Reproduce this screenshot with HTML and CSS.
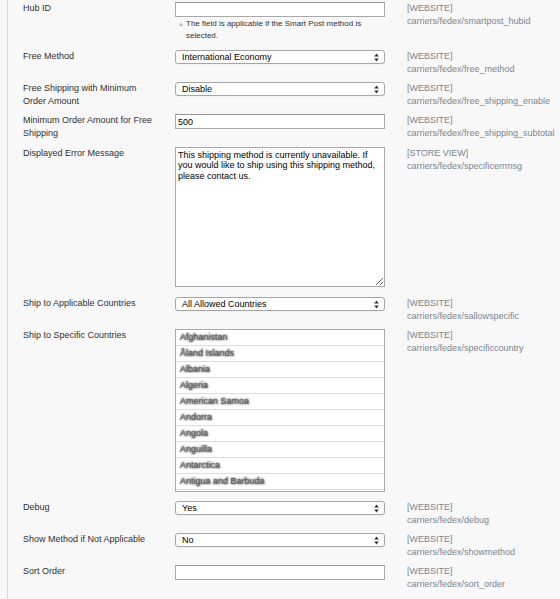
FILE: index.html
```html
<!DOCTYPE html>
<html>
<head>
<meta charset="utf-8">
<link rel="stylesheet" href="styles.css">
</head>
<body>
<div class="page">
  <div class="row r-hub">
    <div class="label">Hub ID</div>
    <div class="control">
      <input class="text" type="text" value="">
      <div class="note"><span class="note-ico">▲</span><span>The field is applicable if the Smart Post method is selected.</span></div>
    </div>
    <div class="scope"><div>[WEBSITE]</div><div>carriers/fedex/smartpost_hubid</div></div>
  </div>

  <div class="row">
    <div class="label">Free Method</div>
    <div class="control"><div class="select"><span>International Economy</span><svg class="arr" width="5" height="9" viewBox="0 0 5 9"><path d="M2.5 0.5L4.8 3.6H0.2Z M2.5 8.5L4.8 5.4H0.2Z" fill="#333"/></svg></div></div>
    <div class="scope"><div>[WEBSITE]</div><div>carriers/fedex/free_method</div></div>
  </div>

  <div class="row">
    <div class="label">Free Shipping with Minimum Order Amount</div>
    <div class="control"><div class="select"><span>Disable</span><svg class="arr" width="5" height="9" viewBox="0 0 5 9"><path d="M2.5 0.5L4.8 3.6H0.2Z M2.5 8.5L4.8 5.4H0.2Z" fill="#333"/></svg></div></div>
    <div class="scope"><div>[WEBSITE]</div><div>carriers/fedex/free_shipping_enable</div></div>
  </div>

  <div class="row r-min">
    <div class="label">Minimum Order Amount for Free Shipping</div>
    <div class="control"><input class="text" type="text" value="500"></div>
    <div class="scope"><div>[WEBSITE]</div><div>carriers/fedex/free_shipping_subtotal</div></div>
  </div>

  <div class="row r-msg">
    <div class="label">Displayed Error Message</div>
    <div class="control"><textarea class="area">This shipping method is currently unavailable. If you would like to ship using this shipping method, please contact us.</textarea></div>
    <div class="scope"><div>[STORE VIEW]</div><div>carriers/fedex/specificerrmsg</div></div>
  </div>

  <div class="row">
    <div class="label">Ship to Applicable Countries</div>
    <div class="control"><div class="select"><span>All Allowed Countries</span><svg class="arr" width="5" height="9" viewBox="0 0 5 9"><path d="M2.5 0.5L4.8 3.6H0.2Z M2.5 8.5L4.8 5.4H0.2Z" fill="#333"/></svg></div></div>
    <div class="scope"><div>[WEBSITE]</div><div>carriers/fedex/sallowspecific</div></div>
  </div>

  <div class="row r-multi">
    <div class="label">Ship to Specific Countries</div>
    <div class="control">
      <div class="multi">
        <div class="opt">Afghanistan</div>
        <div class="opt">Åland Islands</div>
        <div class="opt">Albania</div>
        <div class="opt">Algeria</div>
        <div class="opt">American Samoa</div>
        <div class="opt">Andorra</div>
        <div class="opt">Angola</div>
        <div class="opt">Anguilla</div>
        <div class="opt">Antarctica</div>
        <div class="opt">Antigua and Barbuda</div>
      </div>
    </div>
    <div class="scope"><div>[WEBSITE]</div><div>carriers/fedex/specificcountry</div></div>
  </div>

  <div class="row">
    <div class="label">Debug</div>
    <div class="control"><div class="select"><span>Yes</span><svg class="arr" width="5" height="9" viewBox="0 0 5 9"><path d="M2.5 0.5L4.8 3.6H0.2Z M2.5 8.5L4.8 5.4H0.2Z" fill="#333"/></svg></div></div>
    <div class="scope"><div>[WEBSITE]</div><div>carriers/fedex/debug</div></div>
  </div>

  <div class="row">
    <div class="label">Show Method if Not Applicable</div>
    <div class="control"><div class="select"><span>No</span><svg class="arr" width="5" height="9" viewBox="0 0 5 9"><path d="M2.5 0.5L4.8 3.6H0.2Z M2.5 8.5L4.8 5.4H0.2Z" fill="#333"/></svg></div></div>
    <div class="scope"><div>[WEBSITE]</div><div>carriers/fedex/showmethod</div></div>
  </div>

  <div class="row">
    <div class="label">Sort Order</div>
    <div class="control"><input class="text" type="text" value=""></div>
    <div class="scope"><div>[WEBSITE]</div><div>carriers/fedex/sort_order</div></div>
  </div>
</div>
</body>
</html>
```

FILE: styles.css
```css
html, body {
  margin: 0;
  padding: 0;
  background: #f8f8f8;
}
body {
  font-family: "Liberation Sans", Arial, Helvetica, sans-serif;
  font-size: 9px;
  color: #303030;
}
.page {
  margin-left: 7px;
  border-left: 1px solid #d9d9d9;
  padding: 2px 0 0 15px;
  min-height: 597px;
}
.row {
  display: grid;
  grid-template-columns: 152px 210px 1fr;
  column-gap: 0;
  margin-bottom: 6px;
  align-items: start;
}
.r-hub { margin-bottom: 8px; }
.r-min { margin-bottom: 7px; }
.r-msg { margin-bottom: 10px; }
.r-multi { margin-bottom: 9px; }
.label {
  line-height: 13px;
  padding-right: 17px;
  min-height: 26px;
}
.scope {
  padding-left: 22px;
  color: #7b8591;
  line-height: 13px;
  white-space: nowrap;
}
.control { min-width: 0; }
.text {
  display: block;
  box-sizing: border-box;
  width: 210px;
  height: 15px;
  margin: 0;
  padding: 0 2px;
  border: 1px solid #a9a9a9;
  border-top-color: #999;
  background: #fff;
  font-family: "Liberation Sans", Arial, sans-serif;
  font-size: 9px;
  color: #000;
  outline: none;
}
.note {
  display: flex;
  margin-top: 1px;
  font-size: 8px;
  line-height: 12px;
  color: #333;
}
.note-ico {
  flex: none;
  width: 11px;
  padding-left: 3px;
  box-sizing: border-box;
  font-size: 6px;
  color: #b5b5b5;
}
.select {
  box-sizing: border-box;
  width: 210px;
  height: 14px;
  border: 1px solid #a6a6a6;
  border-radius: 3px;
  background: #fff;
  display: flex;
  align-items: center;
  justify-content: space-between;
  padding: 0 5px 0 6px;
  color: #000;
  line-height: 12px;
  box-shadow: 0 0.5px 0 rgba(0,0,0,0.06);
}
.arr { display: block; }
.area {
  display: block;
  box-sizing: border-box;
  width: 210px;
  height: 140px;
  margin: 0;
  padding: 2px 2px;
  border: 1px solid #a9a9a9;
  background: #fff;
  font-family: "Liberation Sans", Arial, sans-serif;
  font-size: 9px;
  line-height: 10.3px;
  color: #000;
  outline: none;
}
.multi {
  box-sizing: border-box;
  width: 210px;
  border: 1px solid #a9a9a9;
  background: #fff;
  padding-bottom: 1px;
}
.opt {
  height: 15px;
  line-height: 15px;
  border-bottom: 1px solid #dcdcdc;
  padding-left: 4px;
  font-size: 9px;
  color: rgba(90,90,90,0.4);
  text-shadow: 0 0 2px #333, 0 0 1.5px #555;
}
```
